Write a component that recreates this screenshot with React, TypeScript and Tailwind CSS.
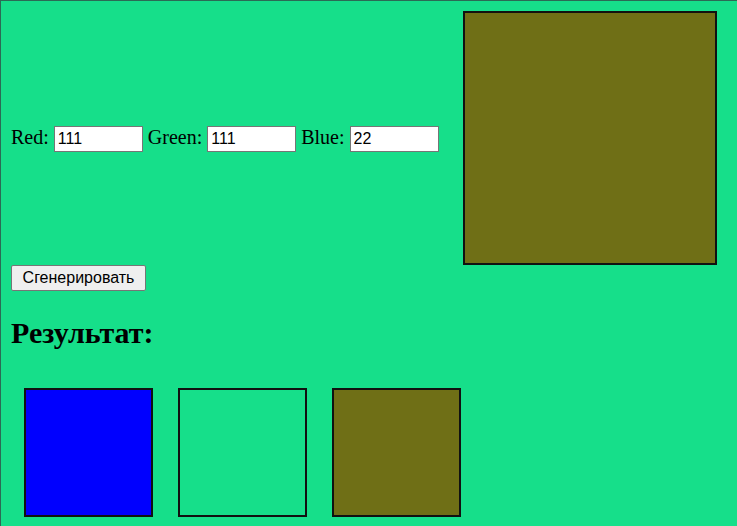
import React from "react"

const serif = { fontFamily: '"Liberation Serif", "Times New Roman", serif' }

function Field({ label, value }: { label: string; value: string }) {
  return (
    <>
      {label}{" "}
      <input
        defaultValue={value}
        className="h-[26px] w-[89px] border border-[#767676] bg-white px-[3px] align-middle text-[16px] text-black outline-none"
        style={{ fontFamily: '"Liberation Sans", Arial, sans-serif' }}
      />{" "}
    </>
  )
}

const swatches = ["bg-[#0000ff]", "bg-[#16df8a]", "bg-[#6f6f16]"]

export default function App() {
  return (
    <div
      className="min-h-screen border-l border-t border-[#2b6b55] bg-[#16df8a] pl-[10px] pt-[10px] text-black"
      style={serif}
    >
      <div className="flex items-center">
        <div className="text-[20px] leading-[26px]">
          <Field label="Red:" value="111" />
          <Field label="Green:" value="111" />
          <Field label="Blue:" value="22" />
        </div>
        <div className="ml-[24px] h-[254px] w-[254px] border-2 border-[#111] bg-[#6f6f16]" />
      </div>

      <button
        className="mt-0 h-[26px] w-[135px] rounded-[2px] border border-[#767676] bg-[#efefef] text-[16px] text-black"
        style={{ fontFamily: '"Liberation Sans", Arial, sans-serif' }}
      >
        Сгенерировать
      </button>

      <h2 className="mt-[25px] text-[30px] font-bold leading-[34px]">Результат:</h2>

      <div className="ml-[13px] mt-[38px] flex gap-[25px]">
        {swatches.map((c) => (
          <div key={c} className={`h-[129px] w-[129px] border-2 border-[#111] ${c}`} />
        ))}
      </div>
    </div>
  )
}
